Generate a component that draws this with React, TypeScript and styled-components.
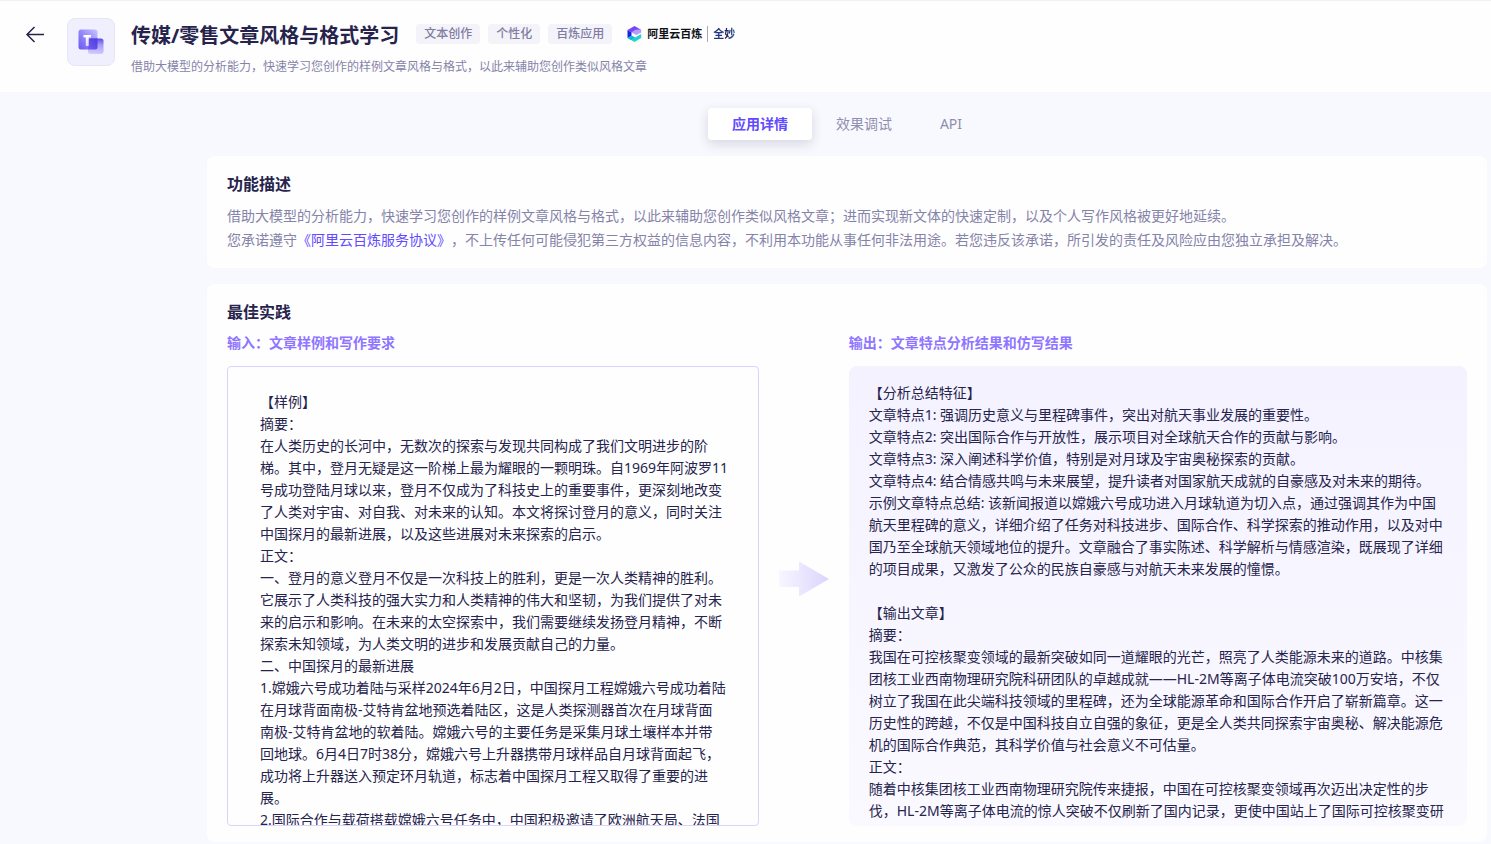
import React, { useState } from 'react';
import styled, { createGlobalStyle } from 'styled-components';

const GlobalStyle = createGlobalStyle`
  *, *::before, *::after { box-sizing: border-box; }
  body {
    margin: 0;
    background: #f8f9fe;
    color: #26244c;
    font-family: 'Noto Sans', 'Noto Sans CJK SC', sans-serif;
    font-size: 14px;
    line-height: 22px;
    text-spacing-trim: space-all;
  }
  h1, h2, h3, p { margin: 0; }
`;

const Header = styled.header`
  display: flex;
  align-items: flex-start;
  height: 92px;
  padding: 17px 24px 0;
  background: #fefefe;
  border-top: 1px solid #f1f1f4;
`;

const BackButton = styled.button`
  display: flex;
  margin: 6px 21px 0 0;
  padding: 0;
  border: 0;
  background: none;
  color: #26244c;
  cursor: pointer;
`;

const AppIcon = styled.div`
  display: flex;
  align-items: center;
  justify-content: center;
  width: 48px;
  height: 48px;
  margin-right: 16px;
  border: 1px solid #e6e5f4;
  border-radius: 8px;
  background: #efeffe;
`;

const Heading = styled.div`
  display: flex;
  flex-direction: column;
  gap: 5px;
`;

const TitleRow = styled.div`
  display: flex;
  align-items: center;
  gap: 8px;
  height: 32px;
`;

const Title = styled.h1`
  margin-right: 9px;
  padding-top: 3px;
  font-size: 20px;
  font-weight: 700;
  line-height: 32px;
`;

const Tag = styled.span`
  padding: 0 8px;
  border-radius: 4px;
  background: #f4f3fa;
  color: #7f7da3;
  font-size: 12px;
  font-weight: 500;
  line-height: 20px;
`;

const Brand = styled.div`
  display: flex;
  align-items: center;
  gap: 5px;
  margin-left: 7px;
  color: #111118;
  font-size: 11px;
  font-weight: 700;
  line-height: 16px;
`;

const BrandDivider = styled.span`
  width: 1px;
  height: 16px;
  background: #a8a8b0;
`;

const BrandSub = styled.span`
  background: linear-gradient(100deg, #1d1b4a 0%, #1f3f8c 30%, #2a1f55 55%, #1c2a6b 75%, #2a8fd0 100%);
  background-clip: text;
  color: transparent;
`;

const Subtitle = styled.p`
  color: #8583a8;
  font-size: 12px;
  line-height: 24px;
`;

const Main = styled.main`
  display: flex;
  flex-direction: column;
  gap: 16px;
  padding: 16px 4px 2px 207px;
`;

const Tabs = styled.div`
  display: flex;
  justify-content: center;
`;

const Tab = styled.button<{ $active: boolean }>`
  height: 32px;
  padding: 0 24px;
  border: 0;
  border-radius: 4px;
  background: ${(p) => (p.$active ? '#ffffff' : 'transparent')};
  box-shadow: ${(p) => (p.$active ? '0 4px 12px rgba(38, 36, 76, 0.16)' : 'none')};
  color: ${(p) => (p.$active ? '#624aff' : '#8f8eaf')};
  font: inherit;
  font-weight: ${(p) => (p.$active ? 700 : 400)};
  cursor: pointer;
`;

const Card = styled.section`
  padding: 16px 20px;
  border-radius: 8px;
  background: #fefeff;
`;

const CardTitle = styled.h2`
  margin-bottom: 8px;
  font-size: 16px;
  font-weight: 700;
  line-height: 24px;
`;

const Description = styled.p`
  color: #8583a8;
  line-height: 24px;
`;

const Link = styled.a`
  color: #624aff;
  text-decoration: none;
`;

const Practice = styled.div`
  display: grid;
  grid-template-columns: minmax(0, 43fr) 50px minmax(0, 50fr);
  column-gap: 20px;
  row-gap: 12px;
`;

const ColumnTitle = styled.h3<{ $column: number }>`
  grid-column: ${(p) => p.$column};
  color: #8f75ff;
  font-size: 14px;
  font-weight: 700;
  line-height: 22px;
`;

const Panel = styled.div`
  height: 460px;
  overflow: hidden;
  white-space: pre-line;
`;

const InputPanel = styled(Panel)`
  padding: 24px 28px 0 32px;
  border: 1px solid #d9d3fd;
  border-radius: 4px;
`;

const OutputPanel = styled(Panel)`
  padding: 16px 20px 0;
  border-radius: 8px;
  background: linear-gradient(180deg, #f4f2ff 0%, #faf9ff 100%);
`;

const ArrowCell = styled.div`
  display: flex;
  align-items: center;
  padding-bottom: 34px;
`;

const tags = ['文本创作', '个性化', '百炼应用'];
const tabs = ['应用详情', '效果调试', 'API'];

const inputText = [
  '【样例】',
  '摘要：',
  '在人类历史的长河中，无数次的探索与发现共同构成了我们文明进步的阶梯。其中，登月无疑是这一阶梯上最为耀眼的一颗明珠。自1969年阿波罗11号成功登陆月球以来，登月不仅成为了科技史上的重要事件，更深刻地改变了人类对宇宙、对自我、对未来的认知。本文将探讨登月的意义，同时关注中国探月的最新进展，以及这些进展对未来探索的启示。',
  '正文：',
  '一、登月的意义登月不仅是一次科技上的胜利，更是一次人类精神的胜利。它展示了人类科技的强大实力和人类精神的伟大和坚韧，为我们提供了对未来的启示和影响。在未来的太空探索中，我们需要继续发扬登月精神，不断探索未知领域，为人类文明的进步和发展贡献自己的力量。',
  '二、中国探月的最新进展',
  '1.嫦娥六号成功着陆与采样2024年6月2日，中国探月工程嫦娥六号成功着陆在月球背面南极-艾特肯盆地预选着陆区，这是人类探测器首次在月球背面',
  '南极-艾特肯盆地的软着陆。嫦娥六号的主要任务是采集月球土壤样本并带',
  '回地球。6月4日7时38分，嫦娥六号上升器携带月球样品自月球背面起飞，',
  '成功将上升器送入预定环月轨道，标志着中国探月工程又取得了重要的进',
  '展。',
  '2.国际合作与载荷搭载嫦娥六号任务中，中国积极邀请了欧洲航天局、法国',
].join('\n');

const outputText = [
  '【分析总结特征】',
  '文章特点1: 强调历史意义与里程碑事件，突出对航天事业发展的重要性。',
  '文章特点2: 突出国际合作与开放性，展示项目对全球航天合作的贡献与影响。',
  '文章特点3: 深入阐述科学价值，特别是对月球及宇宙奥秘探索的贡献。',
  '文章特点4: 结合情感共鸣与未来展望，提升读者对国家航天成就的自豪感及对未来的期待。',
  '示例文章特点总结: 该新闻报道以嫦娥六号成功进入月球轨道为切入点，通过强调其作为中国航天里程碑的意义，详细介绍了任务对科技进步、国际合作、科学探索的推动作用，以及对中国乃至全球航天领域地位的提升。文章融合了事实陈述、科学解析与情感渲染，既展现了详细的项目成果，又激发了公众的民族自豪感与对航天未来发展的憧憬。',
  '',
  '【输出文章】',
  '摘要：',
  '我国在可控核聚变领域的最新突破如同一道耀眼的光芒，照亮了人类能源未来的道路。中核集团核工业西南物理研究院科研团队的卓越成就——HL-2M等离子体电流突破100万安培，不仅树立了我国在此尖端科技领域的里程碑，还为全球能源革命和国际合作开启了崭新篇章。这一历史性的跨越，不仅是中国科技自立自强的象征，更是全人类共同探索宇宙奥秘、解决能源危机的国际合作典范，其科学价值与社会意义不可估量。',
  '正文：',
  '随着中核集团核工业西南物理研究院传来捷报，中国在可控核聚变领域再次迈出决定性的步伐，HL-2M等离子体电流的惊人突破不仅刷新了国内记录，更使中国站上了国际可控核聚变研',
].join('\n');

function BackIcon() {
  return (
    <svg width="22" height="22" viewBox="0 0 22 22" fill="none" stroke="currentColor" strokeWidth="1.5">
      <path d="M20 10.5H3M10.5 3L3 10.5L10.5 18" />
    </svg>
  );
}

function TextAppIcon() {
  return (
    <svg width="26" height="26" viewBox="0 0 26 26">
      <defs>
        <linearGradient id="back" x1="0" y1="1" x2="1" y2="0">
          <stop offset="0" stopColor="#6a57f0" />
          <stop offset="0.5" stopColor="#9388f8" />
          <stop offset="1" stopColor="#cdc5ff" />
        </linearGradient>
        <linearGradient id="front" x1="0.6" y1="0" x2="0.5" y2="1">
          <stop offset="0" stopColor="#5f4de6" />
          <stop offset="0.4" stopColor="#a79bfa" />
          <stop offset="1" stopColor="#d3ccff" />
        </linearGradient>
        <linearGradient id="overlap" x1="0" y1="1" x2="1" y2="0">
          <stop offset="0" stopColor="#7060f2" />
          <stop offset="1" stopColor="#4f3bdc" />
        </linearGradient>
        <linearGradient id="letter" x1="0" y1="0" x2="0" y2="1">
          <stop offset="0" stopColor="#ffffff" />
          <stop offset="1" stopColor="#dcd7ff" />
        </linearGradient>
      </defs>
      <rect x="0.5" y="0.5" width="19" height="20" rx="2.5" fill="url(#back)" />
      <rect x="10" y="9.5" width="15.5" height="15.5" rx="2.5" fill="url(#front)" />
      <path d="M12.5 9.5H19.5V18a2.5 2.500 0 0 1-2.5 2.5H10V12a2.5 2.5 0 0 1 2.5-2.5z" fill="url(#overlap)" />
      <path d="M5.5 6H13V8.500H10.700V17H7.800V8.500H5.5z" fill="url(#letter)" />
    </svg>
  );
}

function BrandIcon() {
  return (
    <svg width="15" height="16" viewBox="0 0 15 16">
      <path d="M7.5 0L14.2 3.7L9 4L4.5 6.500L0.5 4z" fill="#7a45f5" />
      <path d="M14.2 3.7V6.500L9.500 9L4.500 6.500L9 3.800z" fill="#b49cfb" />
      <path d="M0.5 4L4.5 6.500V10L0.5 12z" fill="#1a22e0" />
      <path d="M0.5 12L4.5 9.800L8 11.500L14.2 8V12L7.500 16z" fill="#1fd6c8" />
      <path d="M4.5 9.800L8 11.500L4 14L0.5 12z" fill="#12b4dc" />
    </svg>
  );
}

function FlowArrow() {
  return (
    <svg width="50" height="36" viewBox="0 0 50 36" aria-hidden="true">
      <defs>
        <linearGradient id="flow" x1="0" y1="0" x2="1" y2="0">
          <stop offset="0" stopColor="#f8f6ff" />
          <stop offset="1" stopColor="#dbd4fd" />
        </linearGradient>
      </defs>
      <path d="M0 9.5H20V0.5L50 18L20 35.5V26H0z" fill="url(#flow)" />
    </svg>
  );
}

export default function App() {
  const [active, setActive] = useState(tabs[0]);

  return (
    <>
      <GlobalStyle />
      <Header>
        <BackButton type="button" aria-label="返回">
          <BackIcon />
        </BackButton>
        <AppIcon>
          <TextAppIcon />
        </AppIcon>
        <Heading>
          <TitleRow>
            <Title>传媒/零售文章风格与格式学习</Title>
            {tags.map((tag) => (
              <Tag key={tag}>{tag}</Tag>
            ))}
            <Brand>
              <BrandIcon />
              <span>阿里云百炼</span>
              <BrandDivider />
              <BrandSub>全妙</BrandSub>
            </Brand>
          </TitleRow>
          <Subtitle>借助大模型的分析能力，快速学习您创作的样例文章风格与格式，以此来辅助您创作类似风格文章</Subtitle>
        </Heading>
      </Header>
      <Main>
        <Tabs role="tablist">
          {tabs.map((tab) => (
            <Tab
              key={tab}
              type="button"
              role="tab"
              aria-selected={tab === active}
              $active={tab === active}
              onClick={() => setActive(tab)}
            >
              {tab}
            </Tab>
          ))}
        </Tabs>
        <Card>
          <CardTitle>功能描述</CardTitle>
          <Description>
            借助大模型的分析能力，快速学习您创作的样例文章风格与格式，以此来辅助您创作类似风格文章；进而实现新文体的快速定制，以及个人写作风格被更好地延续。
          </Description>
          <Description>
            您承诺遵守<Link href="#agreement">《阿里云百炼服务协议》</Link>
            ，不上传任何可能侵犯第三方权益的信息内容，不利用本功能从事任何非法用途。若您违反该承诺，所引发的责任及风险应由您独立承担及解决。
          </Description>
        </Card>
        <Card>
          <CardTitle>最佳实践</CardTitle>
          <Practice>
            <ColumnTitle $column={1}>输入：文章样例和写作要求</ColumnTitle>
            <ColumnTitle $column={3}>输出：文章特点分析结果和仿写结果</ColumnTitle>
            <InputPanel>{inputText}</InputPanel>
            <ArrowCell>
              <FlowArrow />
            </ArrowCell>
            <OutputPanel>{outputText}</OutputPanel>
          </Practice>
        </Card>
      </Main>
    </>
  );
}
